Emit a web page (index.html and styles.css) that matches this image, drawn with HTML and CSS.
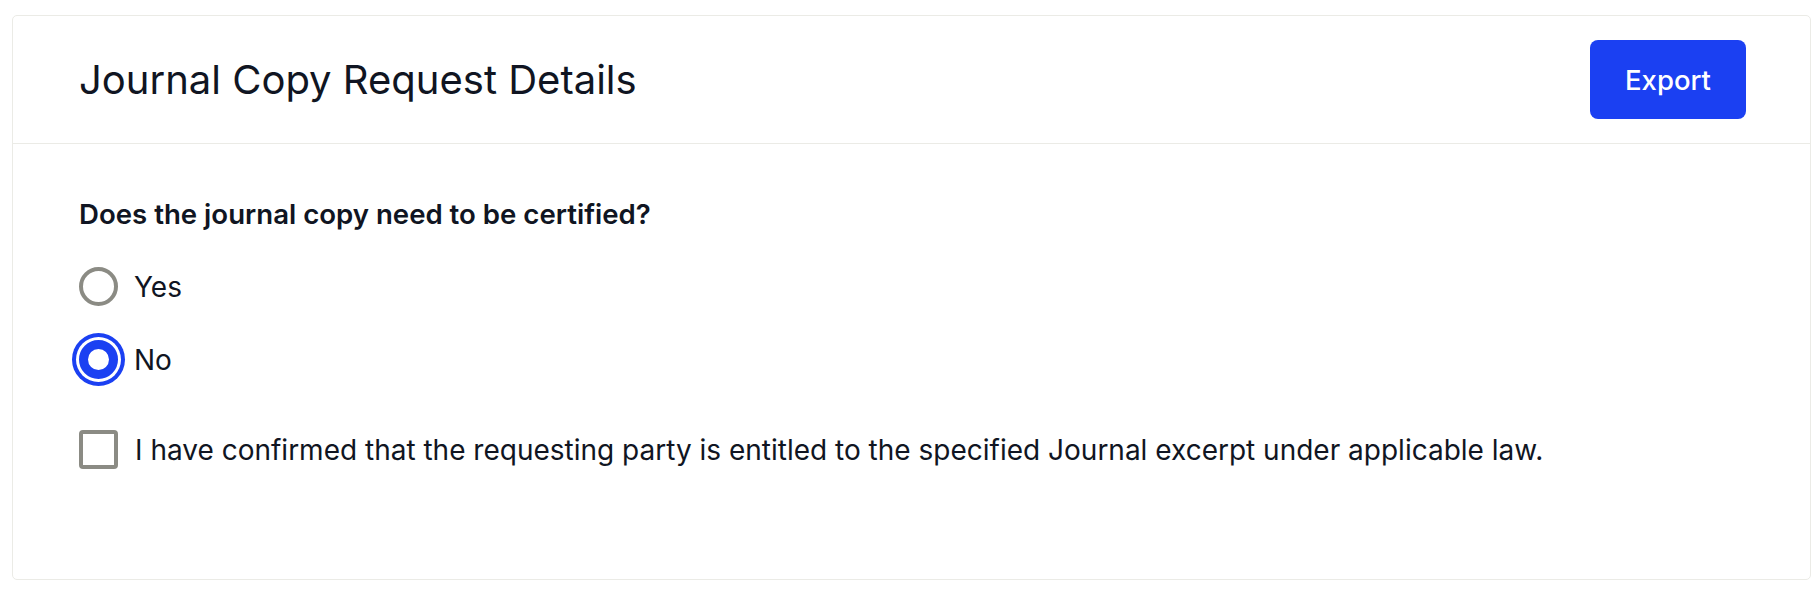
FILE: index.html
```html
<!DOCTYPE html>
<html lang="en">
<head>
<meta charset="utf-8">
<title>Journal Copy Request Details</title>
<link rel="stylesheet" href="styles.css">
</head>
<body>
<section class="card">
  <header class="card-header">
    <h1 class="title">Journal Copy Request Details</h1>
    <button class="btn-export" type="button">Export</button>
  </header>
  <div class="card-body">
    <p class="question">Does the journal copy need to be certified?</p>
    <div class="options">
      <label class="option">
        <span class="radio"></span>
        <span class="option-label">Yes</span>
      </label>
      <label class="option">
        <span class="radio radio-checked"></span>
        <span class="option-label">No</span>
      </label>
    </div>
    <label class="confirm">
      <span class="checkbox"></span>
      <span class="confirm-label">I have confirmed that the requesting party is entitled to the specified Journal excerpt under applicable law.</span>
    </label>
  </div>
</section>
</body>
</html>
```

FILE: styles.css
```css
* { box-sizing: border-box; }

html, body {
  background: #ffffff;
}

body {
  margin: 0;
  padding: 15px 7px 10px 12px;
  font-family: "Inter", "Noto Sans", "Liberation Sans", sans-serif;
  color: #101522;
}

.card {
  border: 1.5px solid #ebebe6;
  border-radius: 5px;
  height: 565px;
  display: flex;
  flex-direction: column;
}

.card-header {
  height: 128px;
  display: flex;
  align-items: center;
  justify-content: space-between;
  padding: 0 64px 0 66px;
  border-bottom: 1.5px solid #ebebe6;
}

.title {
  margin: 0;
  font-size: 40px;
  font-weight: 400;
}

.btn-export {
  width: 156px;
  height: 79px;
  border: none;
  border-radius: 8px;
  background: #1b40f2;
  color: #ffffff;
  font-family: inherit;
  font-size: 27.5px;
  font-weight: 500;
}

.card-body {
  padding: 52px 66px 0;
  display: flex;
  flex-direction: column;
}

.question {
  margin: 0;
  font-size: 27.6px;
  line-height: 36px;
  font-weight: 600;
}

.options {
  margin-top: 35px;
  display: flex;
  flex-direction: column;
  gap: 34px;
}

.option, .confirm {
  display: flex;
  align-items: center;
  gap: 16px;
  font-size: 28px;
  line-height: 36px;
}

.radio {
  width: 39px;
  height: 39px;
  border-radius: 50%;
  border: 4px solid #8b8b84;
  background: #fff;
  flex: none;
}

.radio-checked {
  border: 9px solid #1b40f2;
  box-shadow: 0 0 0 3px #ffffff, 0 0 0 7px #1b40f2;
}

.confirm {
  margin-top: 51px;
  gap: 17px;
}

.checkbox {
  width: 39px;
  height: 39px;
  border: 4px solid #8b8b84;
  border-radius: 4px;
  background: #fff;
  flex: none;
}
```
